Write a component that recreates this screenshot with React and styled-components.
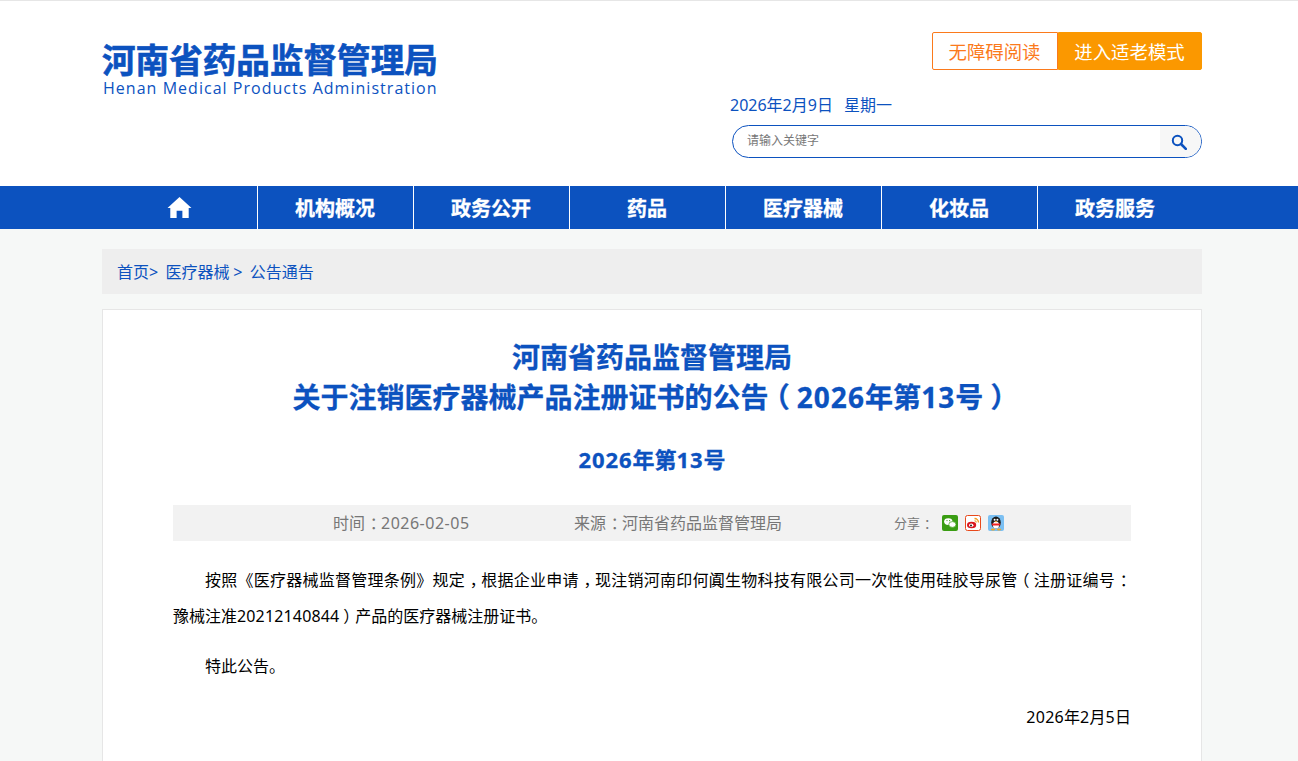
import styled, { createGlobalStyle } from "styled-components";

const blue = "#0c52bf";

const GlobalStyle = createGlobalStyle`
  html, body {
    margin: 0;
    padding: 0;
    background: #f6f8f7;
    font-family: "Noto Sans", "Noto Sans CJK SC", sans-serif;
  }
  * { box-sizing: border-box; }
`;

const Page = styled.div`
  height: 761px;
  overflow: hidden;
`;

const Header = styled.header`
  height: 186px;
  background: #fff;
  border-top: 1px solid #e6e6e6;
`;

const Wrap = styled.div`
  width: 1100px;
  margin-left: 102px;
`;

const HeaderInner = styled(Wrap)`
  display: flex;
  justify-content: space-between;
`;

const Logo = styled.div`
  padding-top: 39px;
  color: ${blue};
`;

const LogoTitle = styled.div`
  font-size: 33.6px;
  font-weight: 700;
  line-height: 40px;
  white-space: nowrap;
  -webkit-text-stroke: 0.6px ${blue};
`;

const LogoSub = styled.div`
  font-size: 16px;
  line-height: 16px;
  letter-spacing: 1.03px;
  margin-left: 1px;
  white-space: nowrap;
  font-family: "Open Sans", sans-serif;
`;

const HeaderRight = styled.div`
  width: 470px;
  padding-top: 31px;
  display: flex;
  flex-direction: column;
`;

const ModeButtons = styled.div`
  display: flex;
  justify-content: flex-end;
`;

const ModeButton = styled.div`
  width: ${(p) => (p.$filled ? "144px" : "126px")};
  height: 38px;
  display: flex;
  align-items: center;
  justify-content: center;
  font-size: 18.4px;
  padding-right: 1px;
  border: 1px solid ${(p) => (p.$filled ? "#fb9800" : "#fb7a1c")};
  border-radius: ${(p) => (p.$filled ? "0 2px 2px 0" : "2px 0 0 2px")};
  background: ${(p) => (p.$filled ? "#fb9800" : "#fff")};
  color: ${(p) => (p.$filled ? "#fff" : "#fb7a1c")};
`;

const DateLine = styled.div`
  margin-top: 23px;
  margin-left: -2px;
  font-size: 16px;
  line-height: 24px;
  color: ${blue};
  display: flex;
  gap: 11px;
`;

const SearchBox = styled.div`
  margin-top: 8px;
  height: 33px;
  border: 1px solid ${blue};
  border-radius: 17px;
  display: flex;
  align-items: stretch;
  overflow: hidden;
  background: #fff;
`;

const SearchText = styled.div`
  flex: 1;
  padding-left: 14px;
  font-size: 12px;
  line-height: 29px;
  color: #777;
`;

const SearchButton = styled.div`
  width: 41px;
  background: #f7f7f7;
  display: flex;
  align-items: center;
  justify-content: center;
  padding-right: 3px;
`;

const Nav = styled.nav`
  height: 43px;
  background: ${blue};
`;

const NavList = styled.div`
  display: flex;
  margin-left: 101px;
`;

const NavItem = styled.div`
  width: 156px;
  height: 43px;
  display: flex;
  align-items: center;
  justify-content: center;
  color: #fff;
  font-size: 20px;
  font-weight: 700;
  padding-right: ${(p) => (p.$first ? "0" : "1px")};
  -webkit-text-stroke: 0.3px #fff;
  border-left: ${(p) => (p.$first ? "none" : "1px solid #fff")};
`;

const Main = styled(Wrap)`
  padding-top: 20px;
`;

const Breadcrumb = styled.div`
  height: 45px;
  background: #eee;
  padding: 0 0 1px 15px;
  display: flex;
  align-items: center;
  font-size: 16px;
  word-spacing: -0.5px;
  color: ${blue};
  white-space: pre;
`;

const Card = styled.article`
  margin-top: 15px;
  background: #fff;
  border: 1px solid #e6e6e6;
  padding: 27px 70px 0;
  min-height: 500px;
`;

const Title = styled.h1`
  margin: 0;
  text-align: center;
  font-size: 28px;
  line-height: 40px;
  font-weight: 700;
  color: ${blue};
  -webkit-text-stroke: 0.3px ${blue};
`;

const SubTitle = styled.h2`
  margin: 22px 0 0;
  text-align: center;
  font-size: 22px;
  line-height: 40px;
  font-weight: 700;
  color: ${blue};
  -webkit-text-stroke: 0.3px ${blue};
`;

// numerals in the reference run wider than Noto Sans
const Digits = styled.span`
  letter-spacing: ${(p) => p.$gap}px;
`;

// full-width punctuation sits centred in its cell in the reference:
// half-width form of the glyph, with margins filling the cell back to 1em
const Punct = styled.span`
  font-feature-settings: "halt";
  margin-left: ${(p) => p.$left ?? 0.3}em;
  margin-right: ${(p) => 0.5 - (p.$left ?? 0.3)}em;
`;

const Paren = styled(Punct).attrs({ $left: 0.25 })``;

const MetaBar = styled.div`
  margin-top: 26px;
  height: 36px;
  background: #f2f2f2;
  display: flex;
  align-items: center;
  color: #777;
  font-size: 16px;
  padding: 0 0 2px 160px;
`;

const MetaItem = styled.span`
  width: ${(p) => p.$w}px;
  flex: none;
`;

const ShareLabel = styled.span`
  font-size: 13px;
  width: 48px;
  flex: none;
`;

const ShareIcons = styled.div`
  display: flex;
  gap: 7px;
  margin-bottom: -2px;
`;

const Article = styled.div`
  padding-top: 21px;
  display: flex;
  flex-direction: column;
  gap: 14px;
  font-size: 16px;
  line-height: 36px;
  color: #000;
`;

const Paragraph = styled.p`
  margin: 0;
  text-indent: 32px;
  text-align: justify;
`;

const Signed = styled.p`
  margin: 1px 0 0;
  text-align: right;
`;

const HomeIcon = () => (
  <svg width="25" height="23" viewBox="0 0 26 24" fill="#fff">
    <path d="M13 1 L25.5 12.5 L22.6 12.5 L22.6 23 L16 23 L16 15.5 L10 15.5 L10 23 L3.4 23 L3.4 12.5 L.5 12.5 Z" />
  </svg>
);

const SearchIcon = () => (
  <svg width="16" height="16" viewBox="0 0 16 16" fill="none" stroke={blue}>
    <circle cx="6.5" cy="6.5" r="4.7" strokeWidth="2" />
    <path d="M10 10 L14.8 14.8" strokeWidth="2.6" strokeLinecap="round" />
  </svg>
);

const WechatIcon = () => (
  <svg width="16" height="16" viewBox="0 0 16 16">
    <rect width="16" height="16" rx="2" fill="#3a9d13" />
    <ellipse cx="6.3" cy="6.6" rx="4.2" ry="3.4" fill="#fff" />
    <ellipse cx="10.4" cy="9.5" rx="3.6" ry="2.9" fill="#fff" stroke="#3a9d13" strokeWidth=".7" />
    <circle cx="5" cy="5.6" r=".6" fill="#3a9d13" />
    <circle cx="7.6" cy="5.6" r=".6" fill="#3a9d13" />
  </svg>
);

const WeiboIcon = () => (
  <svg width="16" height="16" viewBox="0 0 16 16">
    <rect x=".5" y=".5" width="15" height="15" rx="2" fill="#fff" stroke="#e8491b" />
    <ellipse cx="6.6" cy="10" rx="4.6" ry="3.3" fill="#d9181f" />
    <ellipse cx="6.2" cy="10.2" rx="2.2" ry="1.7" fill="#fff" />
    <circle cx="6" cy="10.4" r="1" fill="#222" />
    <path d="M9.5 3.5 A4 4 0 0 1 13.5 7.5" fill="none" stroke="#f39a1d" strokeWidth="1.3" />
    <path d="M9.5 5.8 A1.8 1.8 0 0 1 11.3 7.6" fill="none" stroke="#f39a1d" strokeWidth="1.1" />
  </svg>
);

const QQIcon = () => (
  <svg width="16" height="16" viewBox="0 0 16 16">
    <rect width="16" height="16" rx="2" fill="#7cc0f2" />
    <ellipse cx="8" cy="7.6" rx="4.8" ry="6" fill="#1c1c1c" />
    <ellipse cx="8" cy="10" rx="3.1" ry="3.6" fill="#fff" />
    <circle cx="6.6" cy="4.8" r="1" fill="#fff" />
    <circle cx="9.4" cy="4.8" r="1" fill="#fff" />
    <path d="M6.6 6 L9.4 6 L8 7.4 Z" fill="#f5a623" />
    <path d="M3.6 8.6 H12.4 L11.8 10.4 H4.2 Z" fill="#e22" />
    <ellipse cx="5" cy="14.5" rx="2.2" ry="1" fill="#f5a623" />
    <ellipse cx="11" cy="14.5" rx="2.2" ry="1" fill="#f5a623" />
  </svg>
);

const navItems = ["机构概况", "政务公开", "药品", "医疗器械", "化妆品", "政务服务"];

export default function App() {
  return (
    <Page>
      <GlobalStyle />
      <Header>
        <HeaderInner>
          <Logo>
            <LogoTitle>河南省药品监督管理局</LogoTitle>
            <LogoSub>Henan Medical Products Administration</LogoSub>
          </Logo>
          <HeaderRight>
            <ModeButtons>
              <ModeButton>无障碍阅读</ModeButton>
              <ModeButton $filled>进入适老模式</ModeButton>
            </ModeButtons>
            <DateLine>
              <span>2026年2月9日</span>
              <span>星期一</span>
            </DateLine>
            <SearchBox>
              <SearchText>请输入关键字</SearchText>
              <SearchButton>
                <SearchIcon />
              </SearchButton>
            </SearchBox>
          </HeaderRight>
        </HeaderInner>
      </Header>
      <Nav>
        <NavList>
          <NavItem $first>
            <HomeIcon />
          </NavItem>
          {navItems.map((item) => (
            <NavItem key={item}>{item}</NavItem>
          ))}
        </NavList>
      </Nav>
      <Main>
        <Breadcrumb>首页{">  "}医疗器械{" >  "}公告通告</Breadcrumb>
        <Card>
          <Title>
            河南省药品监督管理局
            <br />
            关于注销医疗器械产品注册证书的公告<Paren>（</Paren>
            <Digits $gap={1.1}>2026</Digits>年第<Digits $gap={1.1}>13</Digits>号<Paren>）</Paren>
          </Title>
          <SubTitle>
            <Digits $gap={0.9}>2026</Digits>年第<Digits $gap={0.9}>13</Digits>号
          </SubTitle>
          <MetaBar>
            <MetaItem $w={241}>
              时间<Punct>：</Punct>
              <Digits $gap={0.5}>2026-02-05</Digits>
            </MetaItem>
            <MetaItem $w={320}>
              来源<Punct>：</Punct>河南省药品监督管理局
            </MetaItem>
            <ShareLabel>
              分享<Punct>：</Punct>
            </ShareLabel>
            <ShareIcons>
              <WechatIcon />
              <WeiboIcon />
              <QQIcon />
            </ShareIcons>
          </MetaBar>
          <Article>
            <Paragraph>
              按照《医疗器械监督管理条例》规定<Punct>，</Punct>根据企业申请<Punct>，</Punct>现注销河南印何阗生物科技有限公司一次性使用硅胶导尿管<Paren>（</Paren>注册证编号<Punct>：</Punct>豫械注准<Digits $gap={0.15}>20212140844</Digits><Paren>）</Paren>产品的医疗器械注册证书。
            </Paragraph>
            <Paragraph>特此公告。</Paragraph>
            <Signed>
              <Digits $gap={0.3}>2026</Digits>年<Digits $gap={0.3}>2</Digits>月<Digits $gap={0.3}>5</Digits>日
            </Signed>
          </Article>
        </Card>
      </Main>
    </Page>
  );
}
